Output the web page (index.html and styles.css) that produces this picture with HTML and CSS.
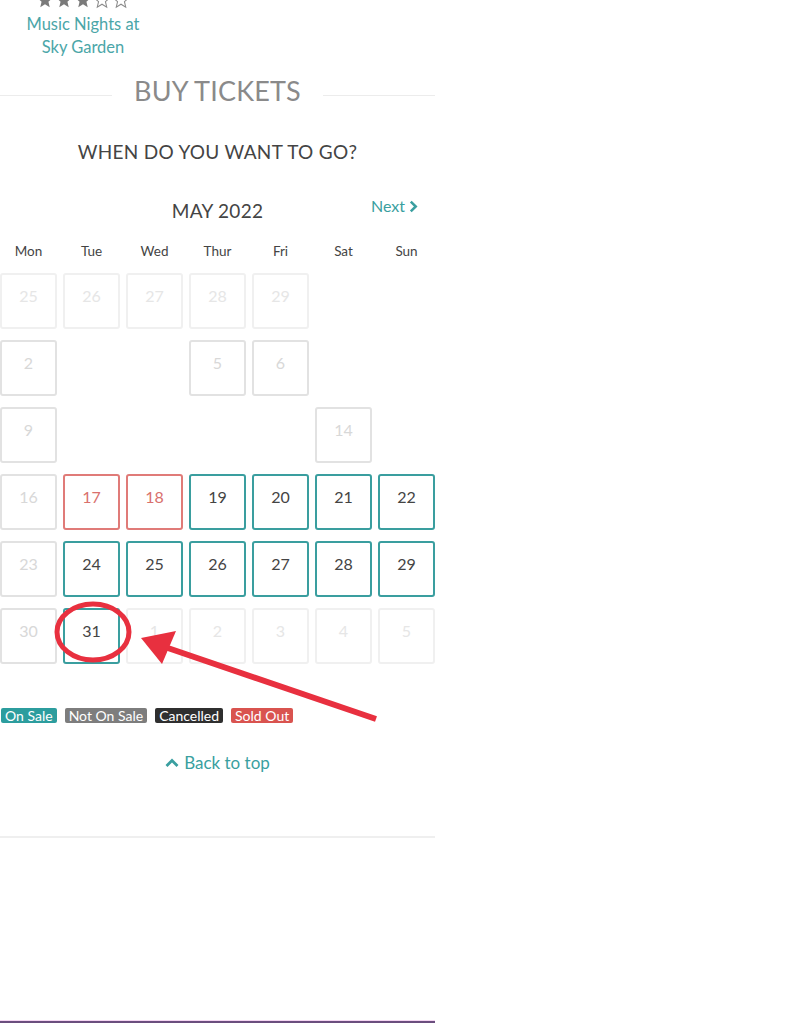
FILE: index.html
```html
<!DOCTYPE html>
<html lang="en">
<head>
<meta charset="utf-8">
<title>Buy Tickets</title>
<link rel="stylesheet" href="styles.css">
</head>
<body>
<div class="page">
  <div class="event">
    <div class="stars">
      <svg class="star" viewBox="0 0 24 24"><path class="full" d="M12 2l2.9 6.9 7.1.6-5.4 4.7 1.7 7.3L12 17.6 5.7 21.5l1.7-7.3L2 9.5l7.1-.6z"/></svg>
      <svg class="star" viewBox="0 0 24 24"><path class="full" d="M12 2l2.9 6.9 7.1.6-5.4 4.7 1.7 7.3L12 17.6 5.7 21.5l1.7-7.3L2 9.5l7.1-.6z"/></svg>
      <svg class="star" viewBox="0 0 24 24"><path class="full" d="M12 2l2.9 6.9 7.1.6-5.4 4.7 1.7 7.3L12 17.6 5.7 21.5l1.7-7.3L2 9.5l7.1-.6z"/></svg>
      <svg class="star" viewBox="0 0 24 24"><path class="empty" d="M12 2l2.9 6.9 7.1.6-5.4 4.7 1.7 7.3L12 17.6 5.7 21.5l1.7-7.3L2 9.5l7.1-.6z"/></svg>
      <svg class="star" viewBox="0 0 24 24"><path class="empty" d="M12 2l2.9 6.9 7.1.6-5.4 4.7 1.7 7.3L12 17.6 5.7 21.5l1.7-7.3L2 9.5l7.1-.6z"/></svg>
    </div>
    <div class="event-title">Music Nights at<br>Sky Garden</div>
  </div>

  <h2 class="buy"><span>BUY TICKETS</span></h2>

  <h3 class="when">WHEN DO YOU WANT TO GO?</h3>

  <div class="cal-head">
    <span></span>
    <span class="month">MAY 2022</span>
    <a class="next" href="#">Next <svg class="chev" viewBox="0 0 10 14"><path d="M2 1.5l5.5 5.5L2 12.5"/></svg></a>
  </div>

  <div class="days">
    <span>Mon</span><span>Tue</span><span>Wed</span><span>Thur</span><span>Fri</span><span>Sat</span><span>Sun</span>
  </div>

  <div class="grid">
    <div class="cell other">25</div><div class="cell other">26</div><div class="cell other">27</div><div class="cell other">28</div><div class="cell other">29</div><div class="cell none"></div><div class="cell none"></div>
    <div class="cell off">2</div><div class="cell none"></div><div class="cell none"></div><div class="cell off">5</div><div class="cell off">6</div><div class="cell none"></div><div class="cell none"></div>
    <div class="cell off">9</div><div class="cell none"></div><div class="cell none"></div><div class="cell none"></div><div class="cell none"></div><div class="cell off">14</div><div class="cell none"></div>
    <div class="cell off">16</div><div class="cell sold">17</div><div class="cell sold">18</div><div class="cell sale">19</div><div class="cell sale">20</div><div class="cell sale">21</div><div class="cell sale">22</div>
    <div class="cell off">23</div><div class="cell sale">24</div><div class="cell sale">25</div><div class="cell sale">26</div><div class="cell sale">27</div><div class="cell sale">28</div><div class="cell sale">29</div>
    <div class="cell off">30</div><div class="cell sale">31</div><div class="cell other">1</div><div class="cell other">2</div><div class="cell other">3</div><div class="cell other">4</div><div class="cell other">5</div>
  </div>

  <div class="legend">
    <span class="badge b-sale">On Sale</span>
    <span class="badge b-not">Not On Sale</span>
    <span class="badge b-cancel">Cancelled</span>
    <span class="badge b-sold">Sold Out</span>
  </div>

  <a class="top" href="#"><svg class="up" viewBox="0 0 14 10"><path d="M1.5 8L7 2.5 12.5 8"/></svg>Back to top</a>

  <div class="rule"></div>
  <div class="footer-line"></div>

  <svg class="annot" viewBox="0 0 435 1024" width="435" height="1024">
    <ellipse cx="93" cy="632" rx="36" ry="28" />
    <line x1="376" y1="719" x2="162" y2="646" />
    <polygon points="141,638 176,631 162,664" />
  </svg>
</div>
</body>
</html>
```

FILE: styles.css
```css
html, body {
  margin: 0;
  padding: 0;
  background: #fff;
}

body {
  font-family: Lato, "Open Sans", "Liberation Sans", sans-serif;
  color: #444;
  overflow: hidden;
}

.page {
  position: relative;
  width: 435px;
  height: 1024px;
}

/* event header */
.event {
  width: 166px;
  display: flex;
  flex-direction: column;
  align-items: center;
}

.stars {
  display: flex;
  gap: 1px;
  margin-top: -9px;
  height: 18px;
}

.star {
  width: 18px;
  height: 18px;
}

.star .full {
  fill: #7a7a7a;
}

.star .empty {
  fill: none;
  stroke: #8a8a8a;
  stroke-width: 1.4;
}

.event-title {
  color: #4ba6a8;
  font-size: 16.5px;
  line-height: 23px;
  text-align: center;
  margin-top: 4px;
}

/* buy tickets */
.buy {
  margin: 15px 0 0;
  display: flex;
  align-items: center;
  font-weight: 400;
  font-size: 27px;
  line-height: 34px;
  color: #8a8a8a;
  letter-spacing: 0.2px;
}

.buy::before,
.buy::after {
  content: "";
  flex: 1;
  height: 1px;
  background: #ececec;
  margin-top: 8px;
}

.buy span {
  padding: 0 22px;
}

.when {
  margin: 32px 0 0;
  text-align: center;
  font-weight: 400;
  font-size: 19px;
  line-height: 24px;
  color: #444;
  letter-spacing: 0.3px;
}

/* calendar header */
.cal-head {
  margin-top: 35px;
  display: grid;
  grid-template-columns: 1fr auto 1fr;
  height: 24px;
}

.month {
  font-size: 19px;
  line-height: 24px;
  color: #444;
  letter-spacing: 0.3px;
}

.next {
  justify-self: end;
  align-self: start;
  margin-top: -3px;
  margin-right: 17px;
  color: #3a9fa0;
  text-decoration: none;
  font-size: 16px;
  line-height: 20px;
  display: flex;
  align-items: center;
  gap: 4px;
}

.chev {
  width: 9px;
  height: 13px;
}

.chev path {
  fill: none;
  stroke: #3a9fa0;
  stroke-width: 2.8;
}

.days {
  margin-top: 19px;
  display: grid;
  grid-template-columns: repeat(7, 57px);
  column-gap: 6px;
  font-size: 13.5px;
  line-height: 18px;
  color: #444;
  text-align: center;
}

.grid {
  margin-top: 13px;
  display: grid;
  grid-template-columns: repeat(7, 57px);
  grid-auto-rows: 56px;
  column-gap: 6px;
  row-gap: 11px;
}

.cell {
  box-sizing: border-box;
  border: 2px solid transparent;
  border-radius: 3px;
  text-align: center;
  font-size: 16px;
  line-height: 20px;
  padding-top: 11px;
}

.cell.other {
  border-color: #f0f0f0;
  color: #e6e6e6;
}

.cell.off {
  border-color: #e2e2e2;
  color: #d8d8d8;
}

.cell.sold {
  border-color: #e07b78;
  color: #d9706d;
}

.cell.sale {
  border-color: #3a9e9f;
  color: #444;
}

/* legend */
.legend {
  margin-top: 44px;
  display: flex;
  gap: 8px;
  padding-left: 1px;
}

.badge {
  color: #fff;
  font-size: 14px;
  line-height: 15px;
  padding: 0 4px;
  border-radius: 2px;
}

.b-sale { background: #2c9d9e; }
.b-not { background: #7d7d7d; }
.b-cancel { background: #2f2f2f; }
.b-sold { background: #d9534f; }

.top {
  margin-top: 29px;
  display: flex;
  justify-content: center;
  align-items: center;
  gap: 5px;
  color: #3a9fa0;
  text-decoration: none;
  font-size: 17px;
  line-height: 22px;
}

.up {
  width: 14px;
  height: 10px;
}

.up path {
  fill: none;
  stroke: #3a9fa0;
  stroke-width: 2.8;
}

.rule {
  margin-top: 62px;
  height: 2px;
  background: #efefef;
}

.footer-line {
  margin-top: 183px;
  height: 2px;
  background: #6b4e7e;
  box-shadow: 0 -1px 0 #f4d6f2;
}

/* annotation overlay */
.annot {
  position: absolute;
  left: 0;
  top: 0;
  pointer-events: none;
}

.annot ellipse {
  fill: none;
  stroke: #e8303f;
  stroke-width: 5;
}

.annot line {
  stroke: #e8303f;
  stroke-width: 6;
}

.annot polygon {
  fill: #e8303f;
}
```
